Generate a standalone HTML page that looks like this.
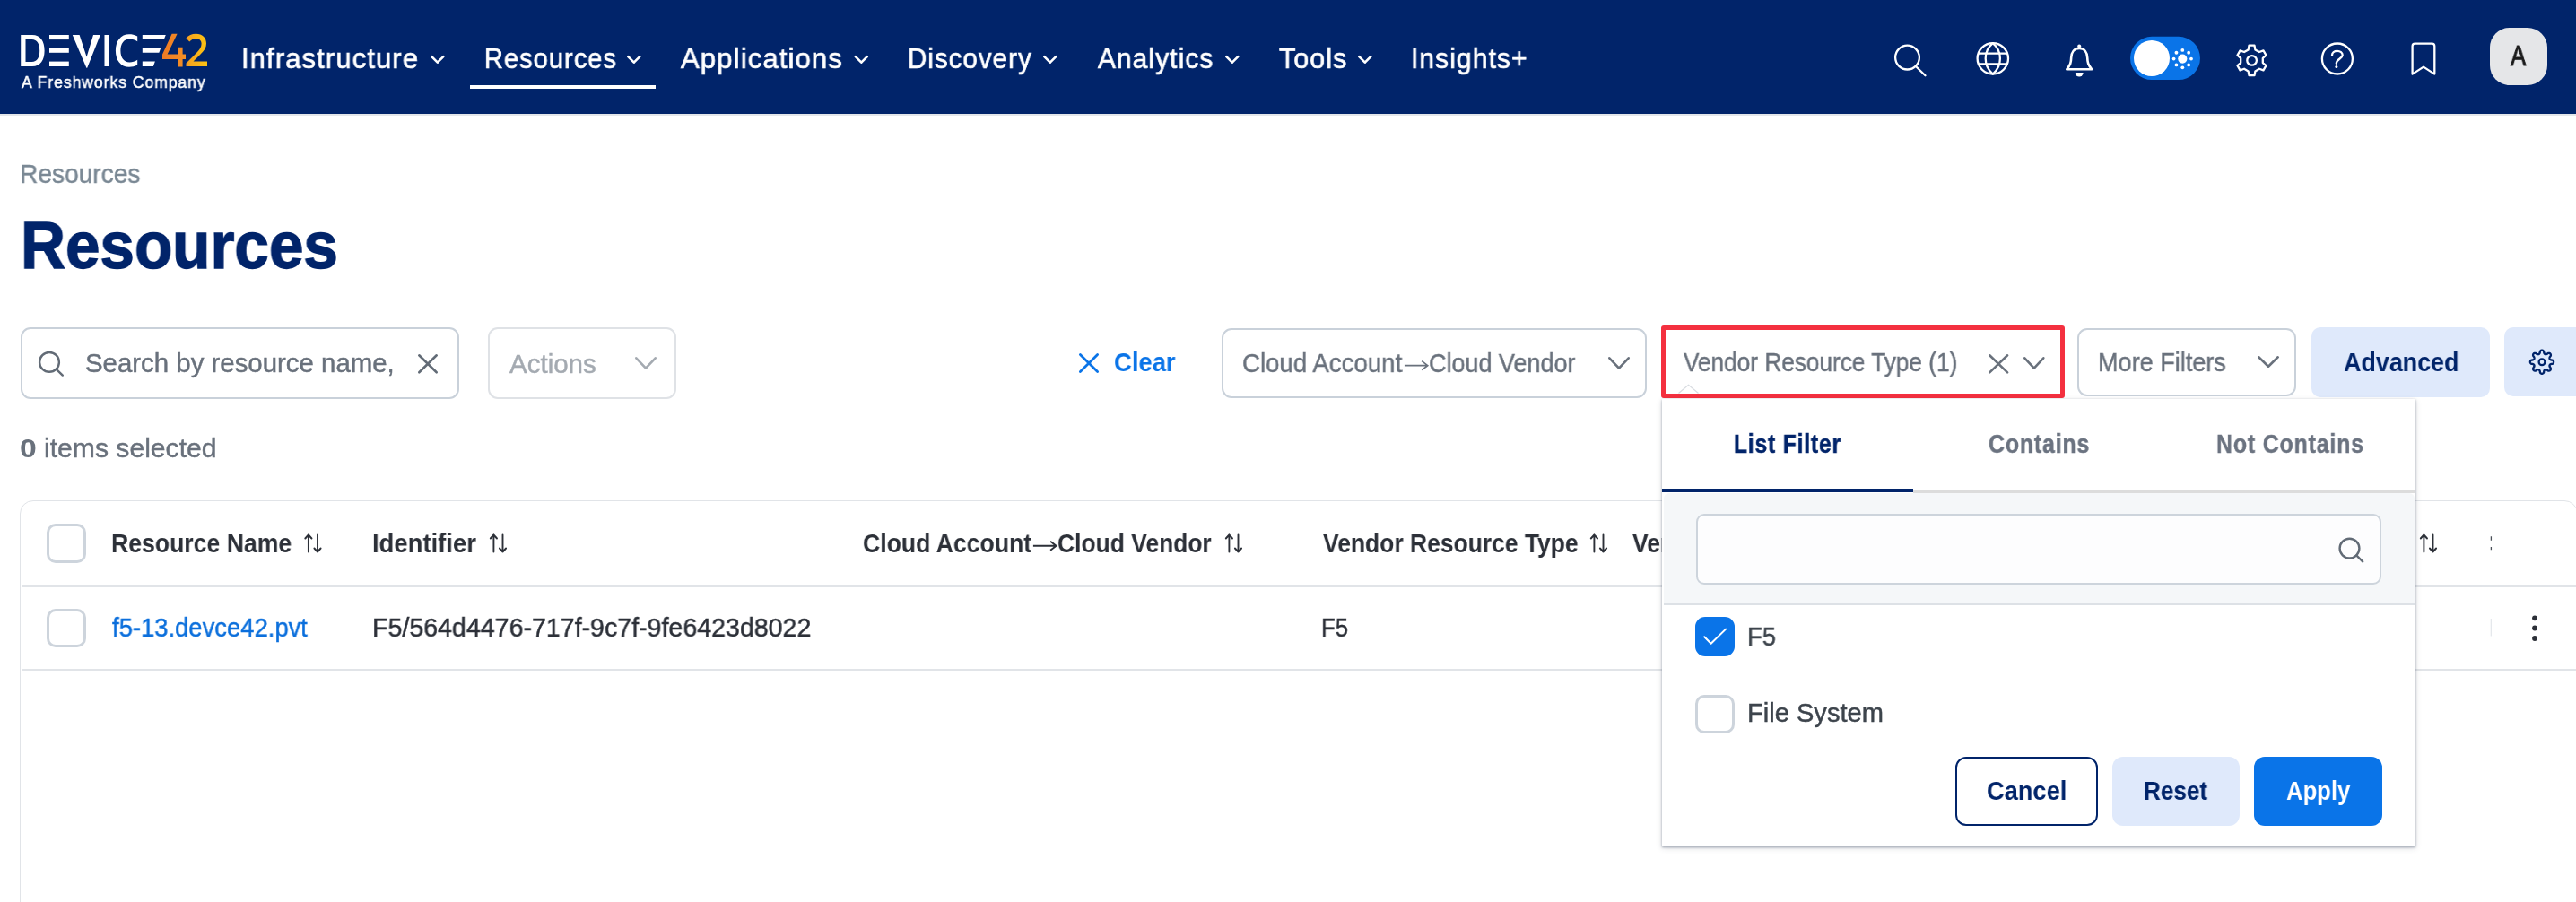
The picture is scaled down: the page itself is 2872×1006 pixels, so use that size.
<!DOCTYPE html>
<html><head><meta charset="utf-8"><title>Resources</title>
<style>
html,body{margin:0;padding:0;width:2872px;height:1006px;overflow:hidden;background:#fff}
body{position:relative;font-family:"Liberation Sans",sans-serif}
.a{position:absolute;box-sizing:border-box}
.t{position:absolute;white-space:nowrap;line-height:1;transform-origin:0 0;will-change:transform}
.base{position:absolute;left:0;top:0;width:2872px;height:1006px;z-index:1}
.pop{position:absolute;left:0;top:0;width:2872px;height:1006px;z-index:2}
</style></head><body>
<div class="base">
<div class="a" style="left:0px;top:0px;width:2872.00px;height:127.00px;background:#01246a"></div><div class="a" style="left:0px;top:127px;width:2872.00px;height:2.00px;background:#e3e6ea"></div><div class="a" style="left:524px;top:95px;width:207.00px;height:4.00px;background:#fff"></div><div class="a" style="left:22.5px;top:365px;width:489.10px;height:80.40px;border:2.2px solid #c9d1da;border-radius:11px;background:#fff"></div><div class="a" style="left:544.3px;top:365.3px;width:210.20px;height:79.30px;border:2.2px solid #dfe2e6;border-radius:11px;background:#fff"></div><div class="a" style="left:1362.4px;top:365.5px;width:474.00px;height:78.80px;border:2.2px solid #c9d1da;border-radius:11px;background:#fff"></div><div class="a" style="left:1852px;top:363.2px;width:450.30px;height:80.80px;border:5.6px solid #f4303f;border-radius:3px;background:#fff"></div><div class="a" style="left:2316.2px;top:365.5px;width:244.10px;height:76.20px;border:2.2px solid #c9d1da;border-radius:11px;background:#fff"></div><div class="a" style="left:2577px;top:365px;width:199.00px;height:77.60px;background:#dfe9fb;border-radius:10px"></div><div class="a" style="left:2792px;top:365px;width:98.00px;height:76.50px;background:#dfe9fb;border-radius:10px"></div><div class="a" style="left:22.2px;top:558px;width:2851.80px;height:502.00px;border:1.8px solid #e1e4e8;border-radius:15px;background:#fff"></div><div class="a" style="left:25px;top:653px;width:2847.00px;height:2.00px;background:#e1e4e8"></div><div class="a" style="left:25px;top:746px;width:2847.00px;height:2.00px;background:#e1e4e8"></div><div class="a" style="left:52px;top:584px;width:44.00px;height:43.70px;border:3.6px solid #cdd4dc;border-radius:10px;background:#fff"></div><div class="a" style="left:52px;top:678.6px;width:44.00px;height:43.70px;border:3.6px solid #cdd4dc;border-radius:10px;background:#fff"></div>
<svg class="a" width="2872" height="1006" viewBox="0 0 2872 1006" style="left:0;top:0"><polyline points="481.30,63.10 487.80,69.70 494.30,63.10" fill="none" stroke="#fff" stroke-width="2.6" stroke-linecap="round" stroke-linejoin="round"/><polyline points="700.30,63.10 706.80,69.70 713.30,63.10" fill="none" stroke="#fff" stroke-width="2.6" stroke-linecap="round" stroke-linejoin="round"/><polyline points="953.80,63.10 960.30,69.70 966.80,63.10" fill="none" stroke="#fff" stroke-width="2.6" stroke-linecap="round" stroke-linejoin="round"/><polyline points="1164.30,63.10 1170.80,69.70 1177.30,63.10" fill="none" stroke="#fff" stroke-width="2.6" stroke-linecap="round" stroke-linejoin="round"/><polyline points="1367.30,63.10 1373.80,69.70 1380.30,63.10" fill="none" stroke="#fff" stroke-width="2.6" stroke-linecap="round" stroke-linejoin="round"/><polyline points="1515.30,63.10 1521.80,69.70 1528.30,63.10" fill="none" stroke="#fff" stroke-width="2.6" stroke-linecap="round" stroke-linejoin="round"/><path d="M23.2,39 L36,39 C45,39 49.6,46 49.6,56.5 C49.6,67 45,74.1 36,74.1 L23.2,74.1 Z M28.5,44.1 L28.5,69 L35.5,69 C41.5,69 44.2,64 44.2,56.5 C44.2,49 41.5,44.1 35.5,44.1 Z" fill="#fff" fill-rule="evenodd"/><rect x="55" y="39" width="21.8" height="5.1" fill="#fff"/><rect x="55" y="53.5" width="21.8" height="5.3" fill="#fff"/><rect x="55" y="68.6" width="21.8" height="5.4" fill="#fff"/><path d="M80.8,39 L88.6,39 L96.6,63.5 L104,39 L111.8,39 L97.2,75.8 L96.4,75.8 Z" fill="#fff"/><rect x="116.5" y="39" width="5.5" height="35" fill="#fff"/><path d="M153.2,40.5 C150,38.9 147,38.3 144,38.3 C134.5,38.3 128.9,46 128.9,56.5 C128.9,67 134.5,74.8 144,74.8 C147,74.8 150,74.2 153.2,72.6 L153.2,66.8 C150.5,68.6 147.5,69.5 144.5,69.5 C138,69.5 134.4,64 134.4,56.5 C134.4,49 138,43.6 144.5,43.6 C147.5,43.6 150.5,44.5 153.2,46.3 Z" fill="#fff"/><path d="M158.8,39 L184.8,39 L182.8,44.1 L158.8,44.1 Z M158.8,53.5 L179.3,53.5 L177.3,58.8 L158.8,58.8 Z M158.8,68.6 L172.9,68.6 L170.9,74 L158.8,74 Z" fill="#fff"/><defs><linearGradient id="g42" gradientUnits="userSpaceOnUse" x1="181" x2="231" y1="0" y2="0"><stop offset="0" stop-color="#ee7a25"/><stop offset="0.5" stop-color="#f38f25"/><stop offset="0.6" stop-color="#f6a51f"/><stop offset="1" stop-color="#fcc412"/></linearGradient></defs><path d="M191.6,37.8 L197.6,37.8 L186.6,60.5 L198.3,60.5 L198.3,52.8 L203.6,52.8 L203.6,60.5 L207,60.5 L207,66 L203.6,66 L203.6,74.6 L198.3,74.6 L198.3,66 L181,66 L181,60.8 Z" fill="url(#g42)"/><path d="M207.5,42.5 C210,39.5 213.8,37.8 218.5,37.8 C225.5,37.8 230,42 230,48.5 C230,53 227.8,56.5 223.5,60.5 L215.5,68.5 L231,68.5 L231,74.1 L207.5,74.1 L207.5,70.5 L219.5,58.5 C222.8,55.2 224.6,52.5 224.6,48.8 C224.6,45.2 222.2,43 218.4,43 C215.5,43 213,44.5 211.2,46.6 Z" fill="url(#g42)"/><circle cx="2126.5" cy="64.1" r="13.4" fill="none" stroke="#fff" stroke-width="2.3"/><line x1="2136.2" y1="74.2" x2="2146.5" y2="84.3" stroke="#fff" stroke-width="2.3" stroke-linecap="round"/><circle cx="2221.8" cy="65.35" r="17.2" fill="none" stroke="#fff" stroke-width="2.3"/><path d="M2221.8,48.15 A22.3,22.3 0 0 0 2221.8,82.55 A22.3,22.3 0 0 0 2221.8,48.15 Z" fill="none" stroke="#fff" stroke-width="2.3" stroke-linejoin="round"/><path d="M2205.2,59.6 L2238.4,59.6 M2205.2,71.3 L2238.4,71.3" stroke="#fff" stroke-width="2.3"/><path d="M2318.2,53.9 C2312.3,53.9 2309.4,58.6 2309.2,64.2 C2309,69.8 2308.3,72.4 2304.3,77.3 L2332.1,77.3 C2328.1,72.4 2327.4,69.8 2327.2,64.2 C2327,58.6 2324.1,53.9 2318.2,53.9 Z" fill="none" stroke="#fff" stroke-width="2.6" stroke-linejoin="round"/><circle cx="2318.2" cy="51.6" r="2" fill="#fff"/><path d="M2313.8,81.1 L2322.6,81.1 A4.4,4.4 0 0 1 2313.8,81.1 Z" fill="#fff"/><rect x="2375" y="40.8" width="78" height="48.2" rx="24.1" fill="#0a74e8"/><circle cx="2399" cy="65" r="20" fill="#fff"/><circle cx="2433.3" cy="65.6" r="5.1" fill="#fff"/><circle cx="2443.00" cy="65.60" r="1.9" fill="#fff"/><circle cx="2440.16" cy="72.46" r="1.9" fill="#fff"/><circle cx="2433.30" cy="75.30" r="1.9" fill="#fff"/><circle cx="2426.44" cy="72.46" r="1.9" fill="#fff"/><circle cx="2423.60" cy="65.60" r="1.9" fill="#fff"/><circle cx="2426.44" cy="58.74" r="1.9" fill="#fff"/><circle cx="2433.30" cy="55.90" r="1.9" fill="#fff"/><circle cx="2440.16" cy="58.74" r="1.9" fill="#fff"/><path d="M2506.61,55.42 L2507.49,50.67 L2513.51,50.67 L2514.39,55.42 L2518.93,58.04 L2523.48,56.43 L2526.49,61.64 L2522.82,64.78 L2522.82,70.02 L2526.49,73.16 L2523.48,78.37 L2518.93,76.76 L2514.39,79.38 L2513.51,84.13 L2507.49,84.13 L2506.61,79.38 L2502.07,76.76 L2497.52,78.37 L2494.51,73.16 L2498.18,70.02 L2498.18,64.78 L2494.51,61.64 L2497.52,56.43 L2502.07,58.04 Z" fill="none" stroke="#fff" stroke-width="2.3" stroke-linejoin="round"/><circle cx="2510.6" cy="67.4" r="5.3" fill="none" stroke="#fff" stroke-width="2.3"/><circle cx="2605.9" cy="65.5" r="17" fill="none" stroke="#fff" stroke-width="2.3"/><path d="M2600,61.8 C2600,58.6 2602.6,56.9 2605.8,56.9 C2609.2,56.9 2611.7,58.9 2611.7,61.6 C2611.7,65.2 2604.8,66 2604.8,70.8" fill="none" stroke="#fff" stroke-width="2.3" stroke-linecap="round"/><circle cx="2604.9" cy="74.4" r="1.5" fill="#fff"/><path d="M2689.6,82.6 L2689.6,51.5 Q2689.6,48.7 2692.4,48.7 L2711.5,48.7 Q2714.3,48.7 2714.3,51.5 L2714.3,82.6 L2702,74.6 Z" fill="none" stroke="#fff" stroke-width="2.3" stroke-linejoin="round"/><rect x="2776" y="31" width="64" height="64" rx="22" fill="#e5e6e8"/><circle cx="55" cy="403.9" r="10.9" fill="none" stroke="#626b76" stroke-width="2.4"/><line x1="62.6" y1="411.6" x2="69.8" y2="418.6" stroke="#626b76" stroke-width="2.4" stroke-linecap="round"/><path d="M467.30,396.30 L486.70,415.30 M486.70,396.30 L467.30,415.30" stroke="#626b76" stroke-width="2.6" stroke-linecap="round" fill="none"/><polyline points="709.30,399.30 720.00,410.70 730.70,399.30" fill="none" stroke="#a4aab1" stroke-width="2.6" stroke-linecap="round" stroke-linejoin="round"/><path d="M1204.40,395.40 L1223.60,414.40 M1223.60,395.40 L1204.40,414.40" stroke="#0a74e8" stroke-width="2.8" stroke-linecap="round" fill="none"/><polyline points="1794.30,399.30 1805.00,410.70 1815.70,399.30" fill="none" stroke="#69717c" stroke-width="2.6" stroke-linecap="round" stroke-linejoin="round"/><path d="M1565.9,407.7 L1591.1000000000001,407.7 M1585.2,402.7 L1591.7,407.7 L1585.2,412.7" fill="none" stroke="#69717c" stroke-width="1.7" stroke-linecap="butt" stroke-linejoin="miter"/><path d="M1151.9,608.7 L1177.0,608.7 M1171.1,603.7 L1177.6,608.7 L1171.1,613.7" fill="none" stroke="#2c3038" stroke-width="1.9" stroke-linecap="butt" stroke-linejoin="miter"/><path d="M2218.30,396.30 L2238.10,415.40 M2238.10,396.30 L2218.30,415.40" stroke="#69717c" stroke-width="2.6" stroke-linecap="round" fill="none"/><polyline points="2257.30,399.30 2267.80,410.70 2278.30,399.30" fill="none" stroke="#69717c" stroke-width="2.6" stroke-linecap="round" stroke-linejoin="round"/><polyline points="2518.30,398.30 2529.00,408.70 2539.70,398.30" fill="none" stroke="#69717c" stroke-width="2.6" stroke-linecap="round" stroke-linejoin="round"/><path d="M2847.10,403.70 L2847.07,404.04 L2846.99,404.38 L2846.85,404.71 L2846.65,405.03 L2846.39,405.33 L2846.05,405.61 L2845.55,405.84 L2844.42,405.91 L2843.92,406.08 L2843.56,406.26 L2843.28,406.45 L2843.04,406.64 L2842.85,406.84 L2842.70,407.04 L2842.59,407.26 L2842.52,407.49 L2842.48,407.74 L2842.47,408.02 L2842.50,408.32 L2842.58,408.65 L2842.70,409.03 L2842.93,409.50 L2843.68,410.35 L2843.87,410.87 L2843.92,411.31 L2843.89,411.71 L2843.80,412.07 L2843.67,412.40 L2843.49,412.70 L2843.26,412.96 L2843.00,413.19 L2842.70,413.37 L2842.37,413.50 L2842.01,413.59 L2841.61,413.62 L2841.17,413.57 L2840.65,413.38 L2839.80,412.63 L2839.33,412.40 L2838.95,412.28 L2838.62,412.20 L2838.32,412.17 L2838.04,412.18 L2837.79,412.22 L2837.56,412.29 L2837.34,412.40 L2837.14,412.55 L2836.94,412.74 L2836.75,412.98 L2836.56,413.26 L2836.38,413.62 L2836.21,414.12 L2836.14,415.25 L2835.91,415.75 L2835.63,416.09 L2835.33,416.35 L2835.01,416.55 L2834.68,416.69 L2834.34,416.77 L2834.00,416.80 L2833.66,416.77 L2833.32,416.69 L2832.99,416.55 L2832.67,416.35 L2832.37,416.09 L2832.09,415.75 L2831.86,415.25 L2831.79,414.12 L2831.62,413.62 L2831.44,413.26 L2831.25,412.98 L2831.06,412.74 L2830.86,412.55 L2830.66,412.40 L2830.44,412.29 L2830.21,412.22 L2829.96,412.18 L2829.68,412.17 L2829.38,412.20 L2829.05,412.28 L2828.67,412.40 L2828.20,412.63 L2827.35,413.38 L2826.83,413.57 L2826.39,413.62 L2825.99,413.59 L2825.63,413.50 L2825.30,413.37 L2825.00,413.19 L2824.74,412.96 L2824.51,412.70 L2824.33,412.40 L2824.20,412.07 L2824.11,411.71 L2824.08,411.31 L2824.13,410.87 L2824.32,410.35 L2825.07,409.50 L2825.30,409.03 L2825.42,408.65 L2825.50,408.32 L2825.53,408.02 L2825.52,407.74 L2825.48,407.49 L2825.41,407.26 L2825.30,407.04 L2825.15,406.84 L2824.96,406.64 L2824.72,406.45 L2824.44,406.26 L2824.08,406.08 L2823.58,405.91 L2822.45,405.84 L2821.95,405.61 L2821.61,405.33 L2821.35,405.03 L2821.15,404.71 L2821.01,404.38 L2820.93,404.04 L2820.90,403.70 L2820.93,403.36 L2821.01,403.02 L2821.15,402.69 L2821.35,402.37 L2821.61,402.07 L2821.95,401.79 L2822.45,401.56 L2823.58,401.49 L2824.08,401.32 L2824.44,401.14 L2824.72,400.95 L2824.96,400.76 L2825.15,400.56 L2825.30,400.36 L2825.41,400.14 L2825.48,399.91 L2825.52,399.66 L2825.53,399.38 L2825.50,399.08 L2825.42,398.75 L2825.30,398.37 L2825.07,397.90 L2824.32,397.05 L2824.13,396.53 L2824.08,396.09 L2824.11,395.69 L2824.20,395.33 L2824.33,395.00 L2824.51,394.70 L2824.74,394.44 L2825.00,394.21 L2825.30,394.03 L2825.63,393.90 L2825.99,393.81 L2826.39,393.78 L2826.83,393.83 L2827.35,394.02 L2828.20,394.77 L2828.67,395.00 L2829.05,395.12 L2829.38,395.20 L2829.68,395.23 L2829.96,395.22 L2830.21,395.18 L2830.44,395.11 L2830.66,395.00 L2830.86,394.85 L2831.06,394.66 L2831.25,394.42 L2831.44,394.14 L2831.62,393.78 L2831.79,393.28 L2831.86,392.15 L2832.09,391.65 L2832.37,391.31 L2832.67,391.05 L2832.99,390.85 L2833.32,390.71 L2833.66,390.63 L2834.00,390.60 L2834.34,390.63 L2834.68,390.71 L2835.01,390.85 L2835.33,391.05 L2835.63,391.31 L2835.91,391.65 L2836.14,392.15 L2836.21,393.28 L2836.38,393.78 L2836.56,394.14 L2836.75,394.42 L2836.94,394.66 L2837.14,394.85 L2837.34,395.00 L2837.56,395.11 L2837.79,395.18 L2838.04,395.22 L2838.32,395.23 L2838.62,395.20 L2838.95,395.12 L2839.33,395.00 L2839.80,394.77 L2840.65,394.02 L2841.17,393.83 L2841.61,393.78 L2842.01,393.81 L2842.37,393.90 L2842.70,394.03 L2843.00,394.21 L2843.26,394.44 L2843.49,394.70 L2843.67,395.00 L2843.80,395.33 L2843.89,395.69 L2843.92,396.09 L2843.87,396.53 L2843.68,397.05 L2842.93,397.90 L2842.70,398.37 L2842.58,398.75 L2842.50,399.08 L2842.47,399.38 L2842.48,399.66 L2842.52,399.91 L2842.59,400.14 L2842.70,400.36 L2842.85,400.56 L2843.04,400.76 L2843.28,400.95 L2843.56,401.14 L2843.92,401.32 L2844.42,401.49 L2845.55,401.56 L2846.05,401.79 L2846.39,402.07 L2846.65,402.37 L2846.85,402.69 L2846.99,403.02 L2847.07,403.36 L2847.10,403.70 Z" fill="none" stroke="#01246a" stroke-width="2.3" stroke-linejoin="round"/><circle cx="2834" cy="403.7" r="3.4" fill="none" stroke="#01246a" stroke-width="2.3"/><path d="M343.9,615.5 L343.9,596.5 M340.3,600.5 L343.9,596.5 L347.5,600.5 M354.0,596.5 L354.0,615.5 M350.4,611.5 L354.0,615.5 L357.6,611.5" fill="none" stroke="#2c3038" stroke-width="1.9" stroke-linecap="round" stroke-linejoin="round"/><path d="M550.4,615.5 L550.4,596.5 M546.8,600.5 L550.4,596.5 L554,600.5 M560.5,596.5 L560.5,615.5 M556.9,611.5 L560.5,615.5 L564.1,611.5" fill="none" stroke="#2c3038" stroke-width="1.9" stroke-linecap="round" stroke-linejoin="round"/><path d="M1370.4,615.5 L1370.4,596.5 M1366.8,600.5 L1370.4,596.5 L1374,600.5 M1380.5,596.5 L1380.5,615.5 M1376.9,611.5 L1380.5,615.5 L1384.1,611.5" fill="none" stroke="#2c3038" stroke-width="1.9" stroke-linecap="round" stroke-linejoin="round"/><path d="M1777.4,615.5 L1777.4,596.5 M1773.8,600.5 L1777.4,596.5 L1781,600.5 M1787.5,596.5 L1787.5,615.5 M1783.9,611.5 L1787.5,615.5 L1791.1,611.5" fill="none" stroke="#2c3038" stroke-width="1.9" stroke-linecap="round" stroke-linejoin="round"/><path d="M2702.4,615.5 L2702.4,596.5 M2698.8,600.5 L2702.4,596.5 L2706,600.5 M2712.5,596.5 L2712.5,615.5 M2708.9,611.5 L2712.5,615.5 L2716.1,611.5" fill="none" stroke="#2c3038" stroke-width="1.9" stroke-linecap="round" stroke-linejoin="round"/><path d="M2777.4,598.3 L2777.4,602.7 M2777.4,610 L2777.4,613.2" stroke="#4a5058" stroke-width="1.3"/><path d="M2777.3,690 L2777.3,709.5" stroke="#e3e6ea" stroke-width="1.2"/><circle cx="2826" cy="689.3" r="2.9" fill="#2c3038"/><circle cx="2826" cy="700.5" r="2.9" fill="#2c3038"/><circle cx="2826" cy="712" r="2.9" fill="#2c3038"/></svg>
<div class="t" style="left:269.42px;top:48.54px;font-size:32.03px;font-weight:400;color:#fff;transform:scaleX(0.9647);-webkit-text-stroke:0.7px #fff;letter-spacing:1.2px;">Infrastructure</div><div class="t" style="left:539.54px;top:48.54px;font-size:32.03px;font-weight:400;color:#fff;transform:scaleX(0.9040);-webkit-text-stroke:0.7px #fff;letter-spacing:1.2px;">Resources</div><div class="t" style="left:759.35px;top:48.54px;font-size:32.03px;font-weight:400;color:#fff;transform:scaleX(0.9680);-webkit-text-stroke:0.7px #fff;letter-spacing:1.2px;">Applications</div><div class="t" style="left:1012.02px;top:48.54px;font-size:32.03px;font-weight:400;color:#fff;transform:scaleX(0.9168);-webkit-text-stroke:0.7px #fff;letter-spacing:1.2px;">Discovery</div><div class="t" style="left:1224.35px;top:48.54px;font-size:32.03px;font-weight:400;color:#fff;transform:scaleX(0.9312);-webkit-text-stroke:0.7px #fff;letter-spacing:1.2px;">Analytics</div><div class="t" style="left:1426.35px;top:48.54px;font-size:32.03px;font-weight:400;color:#fff;transform:scaleX(0.9461);-webkit-text-stroke:0.7px #fff;letter-spacing:1.2px;">Tools</div><div class="t" style="left:1573.48px;top:48.54px;font-size:32.03px;font-weight:400;color:#fff;transform:scaleX(0.9335);-webkit-text-stroke:0.7px #fff;letter-spacing:1.2px;">Insights+</div><div class="t" style="left:23.85px;top:83.74px;font-size:17.97px;font-weight:400;color:#fff;transform:scaleX(0.9770);-webkit-text-stroke:0.5px #fff;letter-spacing:1px;">A Freshworks Company</div><div class="t" style="left:2798.65px;top:48.22px;font-size:30.87px;font-weight:400;color:#1b1b1b;transform:scaleX(0.8381);-webkit-text-stroke:0.9px #1b1b1b;">A</div><div class="t" style="left:21.88px;top:180.10px;font-size:28.91px;font-weight:400;color:#7a8894;transform:scaleX(0.9723);-webkit-text-stroke:0.45px #7a8894;">Resources</div><div class="t" style="left:22.67px;top:236.00px;font-size:74.78px;font-weight:700;color:#01246a;transform:scaleX(0.9254);-webkit-text-stroke:1.4px #01246a;">Resources</div><div class="t" style="left:94.62px;top:391.05px;font-size:29.20px;font-weight:400;color:#69717c;transform:scaleX(1.0072);-webkit-text-stroke:0.45px #69717c;">Search by resource name,</div><div class="t" style="left:568.23px;top:391.75px;font-size:29.20px;font-weight:400;color:#a4aab1;transform:scaleX(1.0108);-webkit-text-stroke:0.45px #a4aab1;">Actions</div><div class="t" style="left:22.17px;top:484.63px;font-size:29.86px;font-weight:700;color:#69717c;transform:scaleX(1.1333);">0</div><div class="t" style="left:49.19px;top:485.65px;font-size:29.20px;font-weight:400;color:#69717c;transform:scaleX(1.0322);-webkit-text-stroke:0.45px #69717c;">items selected</div><div class="t" style="left:1242.09px;top:389.31px;font-size:30.00px;font-weight:700;color:#0a74e8;transform:scaleX(0.9144);">Clear</div><div class="t" style="left:1384.77px;top:390.50px;font-size:28.91px;font-weight:400;color:#69717c;transform:scaleX(0.9555);-webkit-text-stroke:0.45px #69717c;">Cloud Account</div><div class="t" style="left:1592.99px;top:390.50px;font-size:28.91px;font-weight:400;color:#69717c;transform:scaleX(0.9330);-webkit-text-stroke:0.45px #69717c;">Cloud Vendor</div><div class="t" style="left:1876.92px;top:390.42px;font-size:28.77px;font-weight:400;color:#69717c;transform:scaleX(0.9106);-webkit-text-stroke:0.45px #69717c;">Vendor Resource Type (1)</div><div class="t" style="left:2338.95px;top:390.10px;font-size:28.91px;font-weight:400;color:#69717c;transform:scaleX(0.9362);-webkit-text-stroke:0.45px #69717c;">More Filters</div><div class="t" style="left:2612.70px;top:389.00px;font-size:30.00px;font-weight:700;color:#01246a;transform:scaleX(0.8961);">Advanced</div><div class="t" style="left:123.73px;top:590.68px;font-size:30.14px;font-weight:700;color:#2c3038;transform:scaleX(0.8833);">Resource Name</div><div class="t" style="left:414.88px;top:590.68px;font-size:30.14px;font-weight:700;color:#2c3038;transform:scaleX(0.9109);">Identifier</div><div class="t" style="left:961.72px;top:590.68px;font-size:30.14px;font-weight:700;color:#2c3038;transform:scaleX(0.8829);">Cloud Account</div><div class="t" style="left:1179.02px;top:590.68px;font-size:30.14px;font-weight:700;color:#2c3038;transform:scaleX(0.8770);">Cloud Vendor</div><div class="t" style="left:1474.70px;top:590.68px;font-size:30.14px;font-weight:700;color:#2c3038;transform:scaleX(0.8777);">Vendor Resource Type</div><div class="t" style="left:1819.60px;top:590.68px;font-size:30.14px;font-weight:700;color:#2c3038;transform:scaleX(0.8777);">Vendor Resource Type</div><div class="t" style="left:125.12px;top:685.23px;font-size:29.35px;font-weight:400;color:#0b6fdc;transform:scaleX(0.9341);-webkit-text-stroke:0.45px #0b6fdc;">f5-13.devce42.pvt</div><div class="t" style="left:414.98px;top:685.23px;font-size:29.35px;font-weight:400;color:#2c3038;transform:scaleX(0.9738);-webkit-text-stroke:0.45px #2c3038;">F5/564d4476-717f-9c7f-9fe6423d8022</div><div class="t" style="left:1473.18px;top:685.23px;font-size:29.35px;font-weight:400;color:#2c3038;transform:scaleX(0.8726);-webkit-text-stroke:0.45px #2c3038;">F5</div>
</div>
<div class="pop">
<div class="a" style="left:1853px;top:445px;width:840px;height:498.5px;background:#fff;box-shadow:0 1px 2.5px rgba(40,55,80,.42),0 2px 7px rgba(40,55,80,.14)"></div><div class="a" style="left:1853px;top:545px;width:280.00px;height:4.00px;background:#01246a"></div><div class="a" style="left:2133px;top:545.6px;width:559.00px;height:4.00px;background:#dcdcdc"></div><div class="a" style="left:1854.5px;top:549.6px;width:837.00px;height:125.40px;background:#f5f7f9;border-bottom:2px solid #dde1e6;border-radius:6px 6px 0 0"></div><div class="a" style="left:1890.6px;top:572.5px;width:764.90px;height:79.50px;border:2px solid #cdd4dc;border-radius:9px;background:#fdfdfe"></div><div class="a" style="left:1890px;top:688px;width:44.00px;height:43.70px;background:#0a74e8;border-radius:11px"></div><div class="a" style="left:1890px;top:774.5px;width:44.00px;height:43.70px;border:3.6px solid #cdd4dc;border-radius:10px;background:#fff"></div><div class="a" style="left:2180.3px;top:844px;width:158.50px;height:76.80px;border:2.4px solid #01246a;border-radius:12px;background:#fff"></div><div class="a" style="left:2355px;top:844px;width:141.60px;height:76.80px;background:#dfe9fb;border-radius:12px"></div><div class="a" style="left:2513px;top:844px;width:142.80px;height:76.80px;background:#0a74e8;border-radius:12px"></div>
<svg class="a" width="2872" height="1006" viewBox="0 0 2872 1006" style="left:0;top:0"><circle cx="2619.5" cy="611.6" r="10.9" fill="none" stroke="#626b76" stroke-width="2.4"/><line x1="2627.2" y1="619.3" x2="2634.2" y2="626.3" stroke="#626b76" stroke-width="2.4" stroke-linecap="round"/><path d="M1900.2,710.2 L1907.6,717.8 L1924.1,701.6" fill="none" stroke="#fff" stroke-width="2.0" stroke-linecap="round" stroke-linejoin="round"/><path d="M1871.5,438.5 L1882.5,429.3 L1893.5,438.5" fill="#fff" stroke="#d8dce1" stroke-width="1.2"/></svg>
<div class="t" style="left:1933.39px;top:481.36px;font-size:28.70px;font-weight:700;color:#01246a;transform:scaleX(0.8554);-webkit-text-stroke:0.5px #01246a;letter-spacing:1px;">List Filter</div><div class="t" style="left:2216.88px;top:481.36px;font-size:28.70px;font-weight:700;color:#6b7380;transform:scaleX(0.8656);-webkit-text-stroke:0.5px #6b7380;letter-spacing:1px;">Contains</div><div class="t" style="left:2470.78px;top:481.36px;font-size:28.70px;font-weight:700;color:#6b7380;transform:scaleX(0.8660);-webkit-text-stroke:0.5px #6b7380;letter-spacing:1px;">Not Contains</div><div class="t" style="left:1948.27px;top:694.71px;font-size:29.49px;font-weight:400;color:#3d444c;transform:scaleX(0.9294);-webkit-text-stroke:0.45px #3d444c;">F5</div><div class="t" style="left:1948.10px;top:781.02px;font-size:28.77px;font-weight:400;color:#3d444c;transform:scaleX(1.0111);-webkit-text-stroke:0.45px #3d444c;">File System</div><div class="t" style="left:2214.88px;top:867.15px;font-size:29.71px;font-weight:700;color:#01246a;transform:scaleX(0.9164);">Cancel</div><div class="t" style="left:2389.82px;top:867.15px;font-size:29.71px;font-weight:700;color:#01246a;transform:scaleX(0.8787);">Reset</div><div class="t" style="left:2549.00px;top:867.15px;font-size:29.71px;font-weight:700;color:#fff;transform:scaleX(0.8640);">Apply</div>
</div>
</body></html>
